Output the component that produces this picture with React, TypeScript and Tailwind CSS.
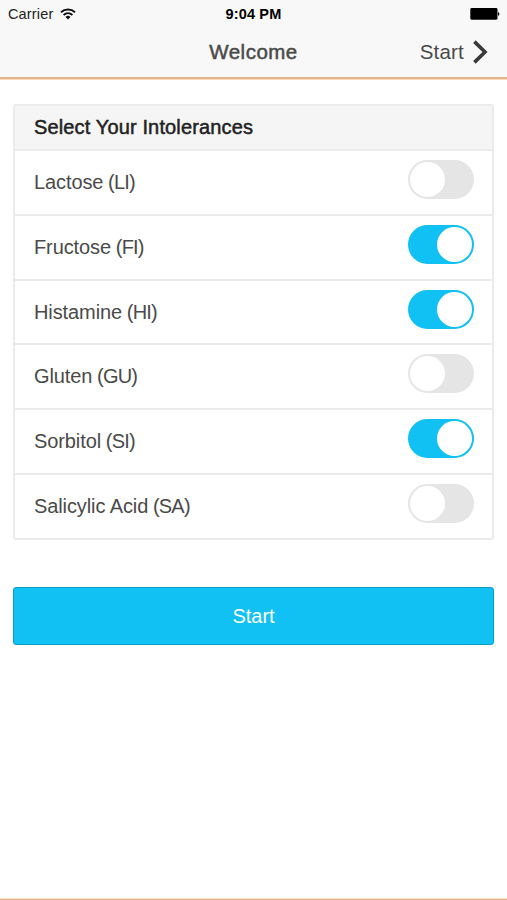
import { useState } from "react";

type Intolerance = {
  name: string;
  code: string;
  enabled: boolean;
};

const initialIntolerances: Intolerance[] = [
  { name: "Lactose", code: "LI", enabled: false },
  { name: "Fructose", code: "FI", enabled: true },
  { name: "Histamine", code: "HI", enabled: true },
  { name: "Gluten", code: "GU", enabled: false },
  { name: "Sorbitol", code: "SI", enabled: true },
  { name: "Salicylic Acid", code: "SA", enabled: false },
];

const StatusBar = () => (
  <div className="grid h-7 grid-cols-3 items-center text-black">
    <div className="flex items-center gap-[7px] pl-2">
      <span className="text-[14.5px] leading-7 tracking-[0.15px] text-[#222]">Carrier</span>
      <svg width="16" height="12" viewBox="0 0 16 12" fill="none" stroke="#111" strokeWidth="1.9">
        <path d="M1 4.2a10.4 10.4 0 0 1 14 0" />
        <path d="M3.6 7a6.6 6.6 0 0 1 8.8 0" />
        <path d="M5.5 8.9a3.6 3.6 0 0 1 5 0L8 11.4z" fill="#111" stroke="none" />
      </svg>
    </div>
    <span className="text-center text-[14.5px] leading-7 font-bold tracking-[0.15px]">
      9:04 PM
    </span>
    <div className="flex justify-end pr-[7px]">
      <svg width="30" height="12" viewBox="0 0 30 12">
        <rect x="0.3" y="0.1" width="27.2" height="11.6" rx="1.4" fill="#000" />
        <path d="M28 4a2 2 0 0 1 0 3.8z" fill="#000" />
      </svg>
    </div>
  </div>
);

const Toggle = ({ checked, onChange }: { checked: boolean; onChange: () => void }) => (
  <button
    role="switch"
    aria-checked={checked}
    onClick={onChange}
    className={`flex h-[39px] w-[66px] items-center rounded-full px-[2px] ${
      checked ? "justify-end bg-[#11c1f3]" : "justify-start bg-[#e5e5e5]"
    }`}
  >
    <span className="size-[35px] rounded-full bg-white" />
  </button>
);

export default function App() {
  const [intolerances, setIntolerances] = useState(initialIntolerances);

  const toggle = (code: string) => {
    setIntolerances((items) =>
      items.map((item) =>
        item.code === code ? { ...item, enabled: !item.enabled } : item
      )
    );
  };

  return (
    <div className="flex h-[900px] w-full flex-col bg-white font-['Liberation_Sans',Arial,sans-serif] text-[#4a4a4a]">
      <header className="h-20 border-b border-[#fdd9b8] bg-[#f8f8f8]">
        <div className="h-[79px] border-b-2 border-[#e2b48e]">
          <StatusBar />
          <div className="grid h-12 grid-cols-3 items-center">
            <span />
            <h1 className="text-center text-[20.5px] leading-6 tracking-[0.5px] [-webkit-text-stroke:0.5px]">
              Welcome
            </h1>
            <button className="flex items-center justify-end gap-[8px] pr-[19px] text-[20.5px] leading-6 tracking-[0.2px]">
              Start
              <svg width="16" height="24" viewBox="0 0 16 24" fill="none" stroke="#3a3a3a" strokeWidth="3.6">
                <path d="M2.4 1.6L13 12L2.4 22.4" />
              </svg>
            </button>
          </div>
        </div>
      </header>

      <main className="flex-1 px-[13px] pt-6">
        <section className="rounded-[3px] border-2 border-[#ebebeb]">
          <h2 className="h-[43px] bg-[#f5f5f5] pl-[19px] text-[20px] leading-[43px] tracking-[0.14px] text-[#222] [-webkit-text-stroke:0.5px]">
            Select Your Intolerances
          </h2>
          <ul>
            {intolerances.map((item) => (
              <li
                key={item.code}
                className="flex h-[64.75px] items-start justify-between border-t-2 border-[#ebebeb] pr-[18px] pl-[19px]"
              >
                <span className="pt-[19px] text-[20px] leading-6 tracking-[-0.1px]">
                  {item.name}
                  <span className="tracking-[-0.8px]"> ({item.code})</span>
                </span>
                <div className="pt-[9px]">
                  <Toggle checked={item.enabled} onChange={() => toggle(item.code)} />
                </div>
              </li>
            ))}
          </ul>
        </section>

        <button className="mt-[47.5px] h-[58px] w-full rounded-[3px] border border-[#0a9dc7] bg-[#11c1f3] text-[20px] leading-6 text-white">
          Start
        </button>
      </main>

      <footer className="h-0.5 border-t border-[#fde0c4] bg-[#e6b48c]" />
    </div>
  );
}
